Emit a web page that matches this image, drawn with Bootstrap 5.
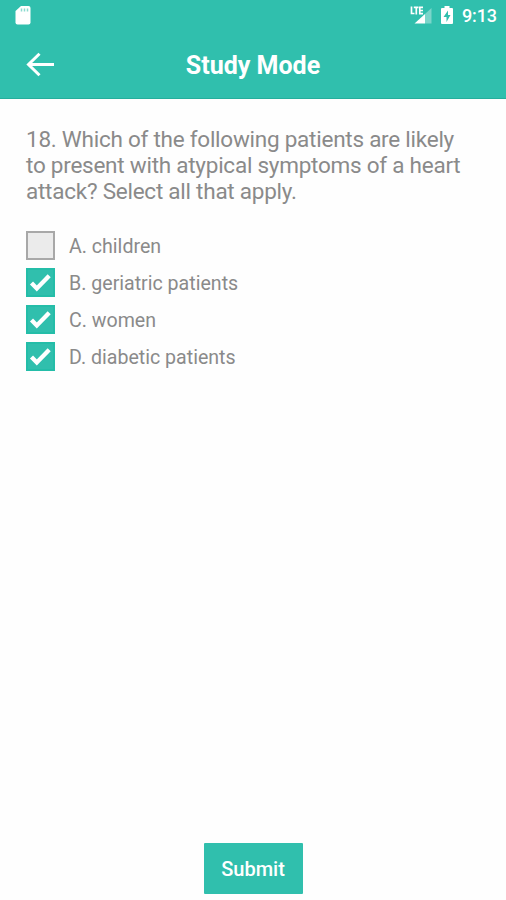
<!DOCTYPE html>
<html lang="en">
<head>
<meta charset="utf-8">
<meta name="viewport" content="width=device-width, initial-scale=1">
<title>Study Mode</title>
<link href="https://cdn.jsdelivr.net/npm/bootstrap@5.3.0/dist/css/bootstrap.min.css" rel="stylesheet">
<style>
  :root { --teal: #30bfad; }
  body { font-family: Roboto, sans-serif; color: #8a8a8a; background: #fefefe; }
  svg { display: block; flex: none; }
  .app-header { background: var(--teal); height: 99px; border-bottom: 1px solid #25ae9c; }
  .status-bar { height: 32px; padding: 0 9px 0 15px; }
  .clock { font-size: 18px; font-weight: 500; line-height: 32px; letter-spacing: -.1px; margin-left: 8px; }
  .title-bar { height: 66px; padding: 0 26px; }
  .side { width: 28px; }
  .app-title { font-size: 25px; font-weight: 700; line-height: 32px; padding-top: 2px; }
  .question { font-size: 22.5px; line-height: 26px; letter-spacing: -.245px; padding: 27px 26px 0; margin-bottom: 27px; }
  .question span { white-space: nowrap; display: block; }
  .answers { padding: 0 26px; gap: 8px; }
  .answer { height: 29px; min-height: 0; gap: 14px; font-size: 19.6px; line-height: 29px; }
  .answer span { padding-top: 1px; }
  .answer .form-check-input { width: 29px; height: 29px; border-radius: 0; border: 2px solid #a8a8a8; background-color: #ebebeb; flex: none; }
  .answer .form-check-input:checked { background-color: var(--teal); border-color: #24bda8;
    background-size: 25px 25px;
    background-image: url("data:image/svg+xml,%3Csvg xmlns='http://www.w3.org/2000/svg' viewBox='0 0 25 25'%3E%3Cpath d='M3.5 13 8.8 18.4 21.2 5.8' fill='none' stroke='%23fff' stroke-width='4.3'/%3E%3C/svg%3E"); }
  .submit { --bs-btn-bg: var(--teal); --bs-btn-color: #fff; --bs-btn-hover-bg: #29ad9c; --bs-btn-hover-color: #fff;
    width: 99px; height: 51px; border: 0; border-radius: 1px; padding: 0; font-size: 20px; font-weight: 500; }
  .submit-bar { padding-bottom: 6px; }
</style>
<script src="https://cdn.jsdelivr.net/npm/bootstrap@5.3.0/dist/js/bootstrap.bundle.min.js"></script>
</head>
<body class="vh-100 d-flex flex-column overflow-hidden">
  <header class="app-header text-white">
    <div class="status-bar d-flex align-items-center justify-content-between">
      <svg width="16" height="20" viewBox="0 0 16 20" aria-hidden="true"><path fill="#fff" d="M6 0h7.500q2 0 2 2v14.500q0 2-2 2h-11q-2 0-2-2V5z"/><path stroke="#8bdbd0" stroke-width="1.500" d="M6.500 2.500v3M9.500 2.500v3M12.500 2.500v3"/></svg>
      <div class="d-flex align-items-center">
        <svg width="23" height="20" viewBox="0 0 23 20" aria-hidden="true"><path fill="#7bd5ca" d="M22.500 2v15.500H16V8z"/><path fill="#fff" d="M16 8v9.500H5.500z"/><path fill="none" stroke="#fff" stroke-width="1.700" d="M2.500 .5v7h3M4.800 1.300h4.700M7.300 1.300V8.500M14 1.300h-3.200v6.400H14M10.800 4.500H14"/></svg>
        <svg class="ms-2" width="14" height="20" viewBox="0 0 14 20" aria-hidden="true"><path fill="#fff" d="M4.500 0h5v2H12q1 0 1 1v14q0 1-1 1H2q-1 0-1-1V3q0-1 1-1h2.500z"/><path fill="#30bfad" d="M8 4.500 3.500 11H6.500v5l4-7H8z"/></svg>
        <span class="clock">9:13</span>
      </div>
    </div>
    <div class="title-bar d-flex align-items-center justify-content-between">
      <a class="side text-white" href="#" aria-label="Back"><svg width="28" height="26" viewBox="0 0 28 26"><path fill="none" stroke="#fff" stroke-width="3" d="M13.500 1.700 2.500 12.500l11 10.800M3 12.500h25"/></svg></a>
      <h1 class="app-title mb-0">Study Mode</h1>
      <span class="side"></span>
    </div>
  </header>
  <main class="flex-grow-1 d-flex flex-column">
    <p class="question"><span>18. Which of the following patients are likely</span><span>to present with atypical symptoms of a heart</span><span>attack? Select all that apply.</span></p>
    <div class="answers d-flex flex-column">
      <label class="answer d-flex align-items-center"><input class="form-check-input m-0" type="checkbox"><span>A. children</span></label>
      <label class="answer d-flex align-items-center"><input class="form-check-input m-0" type="checkbox" checked><span>B. geriatric patients</span></label>
      <label class="answer d-flex align-items-center"><input class="form-check-input m-0" type="checkbox" checked><span>C. women</span></label>
      <label class="answer d-flex align-items-center"><input class="form-check-input m-0" type="checkbox" checked><span>D. diabetic patients</span></label>
    </div>
    <div class="submit-bar mt-auto text-center"><button class="btn submit" type="button">Submit</button></div>
  </main>
</body>
</html>
